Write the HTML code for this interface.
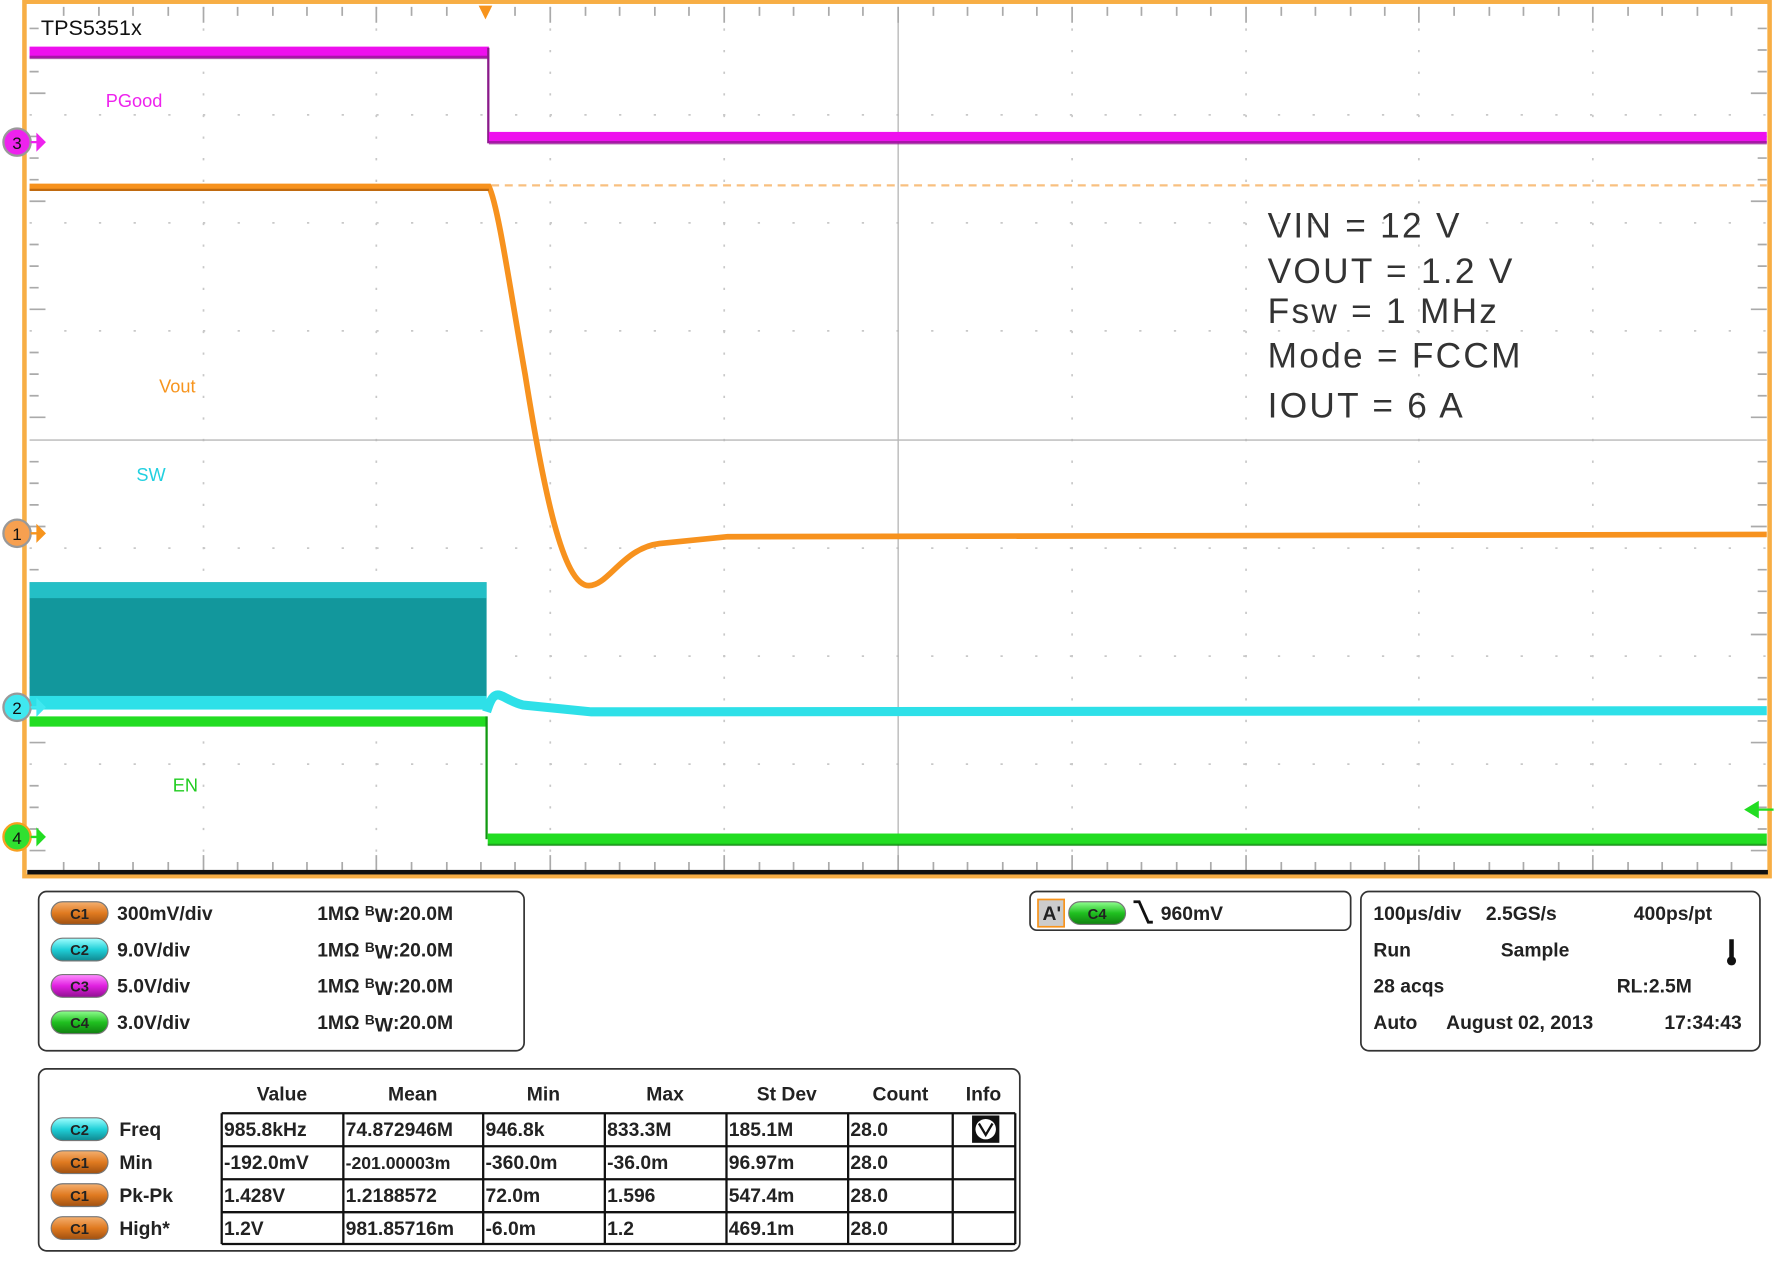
<!DOCTYPE html>
<html><head><meta charset="utf-8"><style>
html,body{margin:0;padding:0;background:#fff;width:1777px;height:1277px;overflow:hidden}
svg{display:block}
text{font-family:"Liberation Sans",Arial,sans-serif}
.b{font-weight:bold;font-size:17px;fill:#222}
</style></head><body>
<svg width="1777" height="1277" viewBox="0 0 1563 1123" preserveAspectRatio="none" xmlns="http://www.w3.org/2000/svg">
<defs>
<linearGradient id="go" x1="0" y1="0" x2="0" y2="1"><stop offset="0" stop-color="#f4b070"/><stop offset=".5" stop-color="#e07a20"/><stop offset="1" stop-color="#a05010"/></linearGradient>
<linearGradient id="gc" x1="0" y1="0" x2="0" y2="1"><stop offset="0" stop-color="#a0ffff"/><stop offset=".5" stop-color="#20d0d8"/><stop offset="1" stop-color="#108890"/></linearGradient>
<linearGradient id="gm" x1="0" y1="0" x2="0" y2="1"><stop offset="0" stop-color="#ff90ff"/><stop offset=".5" stop-color="#e020e0"/><stop offset="1" stop-color="#901090"/></linearGradient>
<linearGradient id="gg" x1="0" y1="0" x2="0" y2="1"><stop offset="0" stop-color="#90ff90"/><stop offset=".5" stop-color="#20c020"/><stop offset="1" stop-color="#108010"/></linearGradient>
</defs>
<rect x="21.5" y="1.5" width="1535" height="769" fill="#fff" stroke="#f7ae45" stroke-width="4"/>
<g stroke="#c8c8c8" stroke-width="1.5" stroke-dasharray="2 17">
<line x1="179" y1="6" x2="179" y2="766"/><line x1="331" y1="6" x2="331" y2="766"/><line x1="484" y1="6" x2="484" y2="766"/><line x1="637" y1="6" x2="637" y2="766"/>
<line x1="943" y1="6" x2="943" y2="766"/><line x1="1096" y1="6" x2="1096" y2="766"/><line x1="1248" y1="6" x2="1248" y2="766"/><line x1="1401" y1="6" x2="1401" y2="766"/>
</g>
<g stroke="#c8c8c8" stroke-width="1.5" stroke-dasharray="2 28.5">
<line x1="26" y1="101" x2="1554" y2="101"/><line x1="26" y1="196" x2="1554" y2="196"/><line x1="26" y1="291" x2="1554" y2="291"/>
<line x1="26" y1="482" x2="1554" y2="482"/><line x1="26" y1="577" x2="1554" y2="577"/><line x1="26" y1="672" x2="1554" y2="672"/>
</g>
<line x1="790" y1="6" x2="790" y2="766" stroke="#b8b8b8" stroke-width="1.2"/>
<line x1="26" y1="387" x2="1554" y2="387" stroke="#b8b8b8" stroke-width="1.2"/>
<g stroke="#aaa" stroke-width="1.5">
<path d="M56,6v8M87,6v8M117,6v8M148,6v8M179,6v14M209,6v8M240,6v8M270,6v8M301,6v8M331,6v14M362,6v8M393,6v8M453,6v8M484,6v14M515,6v8M545,6v8M576,6v8M606,6v8M637,6v14M668,6v8M698,6v8M729,6v8M759,6v8M790,6v14M821,6v8M851,6v8M882,6v8M912,6v8M943,6v14M974,6v8M1004,6v8M1035,6v8M1065,6v8M1096,6v14M1127,6v8M1157,6v8M1188,6v8M1218,6v8M1248,6v14M1279,6v8M1310,6v8M1340,6v8M1371,6v8M1401,6v14M1432,6v8M1462,6v8M1493,6v8M1523,6v8"/>
<path d="M56,758v8M87,758v8M117,758v8M148,758v8M179,752v14M209,758v8M240,758v8M270,758v8M301,758v8M331,752v14M362,758v8M393,758v8M423,758v8M453,758v8M484,752v14M515,758v8M545,758v8M576,758v8M606,758v8M637,752v14M668,758v8M698,758v8M729,758v8M759,758v8M790,752v14M821,758v8M851,758v8M882,758v8M912,758v8M943,752v14M974,758v8M1004,758v8M1035,758v8M1065,758v8M1096,752v14M1127,758v8M1157,758v8M1188,758v8M1218,758v8M1248,752v14M1279,758v8M1310,758v8M1340,758v8M1371,758v8M1401,752v14M1432,758v8M1462,758v8M1493,758v8M1523,758v8"/>
<path d="M26,25h8M26,44h8M26,63h8M26,82h14M26,120h8M26,139h8M26,158h8M26,177h14M26,215h8M26,234h8M26,253h8M26,272h14M26,310h8M26,329h8M26,348h8M26,367h14M26,406h8M26,425h8M26,444h8M26,463h14M26,501h8M26,520h8M26,539h8M26,558h14M26,596h8M26,615h8M26,634h8M26,653h14M26,691h8M26,710h8M26,729h8M26,748h14"/>
<path d="M1554,25h-8M1554,44h-8M1554,63h-8M1554,82h-14M1554,120h-8M1554,139h-8M1554,158h-8M1554,177h-14M1554,215h-8M1554,234h-8M1554,253h-8M1554,272h-14M1554,310h-8M1554,329h-8M1554,348h-8M1554,367h-14M1554,406h-8M1554,425h-8M1554,444h-8M1554,463h-14M1554,501h-8M1554,520h-8M1554,539h-8M1554,558h-14M1554,596h-8M1554,615h-8M1554,634h-8M1554,653h-14M1554,691h-8M1554,710h-8M1554,729h-8M1554,748h-14"/>
</g>
<rect x="24" y="765" width="1531" height="4" fill="#111"/>
<path d="M421,5h12l-6,12z" fill="#f7941d"/>
<rect x="26" y="41" width="404" height="10" fill="#ee10ee"/>
<rect x="26" y="49" width="404" height="3" fill="#8a1a8a" opacity=".7"/>
<rect x="428.5" y="42" width="2" height="84" fill="#8a1a8a"/>
<rect x="430" y="116" width="1124" height="10" fill="#ee10ee"/>
<rect x="430" y="124" width="1124" height="3" fill="#8a1a8a" opacity=".7"/>
<line x1="432" y1="163" x2="1554" y2="163" stroke="#f8c080" stroke-width="2" stroke-dasharray="7 5"/>
<path d="M26,164H430C438,180 448,250 462,330C478,430 495,515 518,515C535,515 548,482 580,478L640,472L1554,470" fill="none" stroke="#f7921e" stroke-width="5"/>
<path d="M26,167H430" stroke="#c06a10" stroke-width="2"/>
<rect x="26" y="512" width="402" height="110" fill="#12979c"/>
<rect x="26" y="512" width="402" height="14" fill="#24bfc6"/>
<rect x="26" y="612" width="402" height="12" fill="#2ee0e8"/>
<path d="M428,626C436,600 440,615 460,620L520,626L1554,625" fill="none" stroke="#2ee0e8" stroke-width="8"/>
<rect x="26" y="630" width="402" height="9" fill="#22dd22"/>
<rect x="427" y="630" width="2" height="108" fill="#119911"/>
<rect x="429" y="733" width="1125" height="10" fill="#22dd22"/>
<rect x="429" y="742" width="1125" height="2" fill="#118811" opacity=".7"/>
<path d="M1560,712h-24M1536,712l10,-6v12z" stroke="#22dd22" stroke-width="2" fill="#22dd22"/>
<text x="36" y="31" font-size="19" fill="#111">TPS5351x</text>
<text x="93" y="94" font-size="16" fill="#ee22ee">PGood</text>
<text x="140" y="345" font-size="16" fill="#f7941d">Vout</text>
<text x="120" y="423" font-size="16" fill="#22d0e0">SW</text>
<text x="152" y="696" font-size="16" fill="#22cc22">EN</text>
<g font-size="31" fill="#333" letter-spacing="2">
<text x="1115" y="209">VIN = 12 V</text>
<text x="1115" y="249">VOUT = 1.2 V</text>
<text x="1115" y="284">Fsw = 1 MHz</text>
<text x="1115" y="323">Mode = FCCM</text>
<text x="1115" y="367">IOUT = 6 A</text>
</g>
<g font-size="15" fill="#111" text-anchor="middle">
<circle cx="15" cy="125" r="12" fill="#ee22ee" stroke="#999" stroke-width="2"/><text x="15" y="131">3</text>
<path d="M27,125h12M39,125l-6,-6v12z" stroke="#ee22ee" stroke-width="2" fill="#ee22ee"/>
<circle cx="15" cy="469" r="12" fill="#f7a050" stroke="#999" stroke-width="2"/><text x="15" y="475">1</text>
<path d="M27,469h12M39,469l-6,-6v12z" stroke="#f7941d" stroke-width="2" fill="#f7941d"/>
<circle cx="15" cy="622" r="12" fill="#40e8f0" stroke="#999" stroke-width="2"/><text x="15" y="628">2</text>
<path d="M27,622h12M39,622l-6,-6v12z" stroke="#40e8f0" stroke-width="2" fill="#40e8f0"/>
<circle cx="15" cy="736" r="12" fill="#30e030" stroke="#f7a020" stroke-width="2"/><text x="15" y="742">4</text>
<path d="M27,736h12M39,736l-6,-6v12z" stroke="#22dd22" stroke-width="2" fill="#22dd22"/>
</g>
<rect x="34" y="784" width="427" height="140" rx="7" fill="#fff" stroke="#333" stroke-width="1.5"/>
<g font-size="13" font-weight="bold" text-anchor="middle" fill="#222">
<rect x="45" y="793" width="50" height="20" rx="10" fill="url(#go)" stroke="#777"/><text x="70" y="808">C1</text>
<rect x="45" y="825" width="50" height="20" rx="10" fill="url(#gc)" stroke="#777"/><text x="70" y="840">C2</text>
<rect x="45" y="857" width="50" height="20" rx="10" fill="url(#gm)" stroke="#777"/><text x="70" y="872">C3</text>
<rect x="45" y="889" width="50" height="20" rx="10" fill="url(#gg)" stroke="#777"/><text x="70" y="904">C4</text>
</g>
<g class="b">
<text x="103" y="809" class="b">300mV/div</text><text x="103" y="841" class="b">9.0V/div</text><text x="103" y="873" class="b">5.0V/div</text><text x="103" y="905" class="b">3.0V/div</text>
<text x="279" y="809" class="b">1MΩ  <tspan font-size="12" dy="-4">B</tspan><tspan dy="6">W</tspan><tspan dy="-2">:20.0M</tspan></text>
<text x="279" y="841" class="b">1MΩ  <tspan font-size="12" dy="-4">B</tspan><tspan dy="6">W</tspan><tspan dy="-2">:20.0M</tspan></text>
<text x="279" y="873" class="b">1MΩ  <tspan font-size="12" dy="-4">B</tspan><tspan dy="6">W</tspan><tspan dy="-2">:20.0M</tspan></text>
<text x="279" y="905" class="b">1MΩ  <tspan font-size="12" dy="-4">B</tspan><tspan dy="6">W</tspan><tspan dy="-2">:20.0M</tspan></text>
</g>
<rect x="906" y="784" width="282" height="34" rx="6" fill="#fff" stroke="#333" stroke-width="1.5"/>
<rect x="913" y="791" width="23" height="24" fill="#ccc" stroke="#f7941d" stroke-width="1.5"/>
<text x="917" y="809" class="b" font-size="15">A'</text>
<rect x="940" y="793" width="50" height="20" rx="10" fill="url(#gg)" stroke="#777"/>
<text x="965" y="808" font-size="13" font-weight="bold" text-anchor="middle" fill="#222">C4</text>
<path d="M997,793h5l8,18h4" fill="none" stroke="#111" stroke-width="2.5"/>
<text x="1021" y="809" class="b">960mV</text>
<rect x="1197" y="784" width="351" height="140" rx="7" fill="#fff" stroke="#333" stroke-width="1.5"/>
<g class="b">
<text x="1208" y="809" class="b">100μs/div</text><text x="1307" y="809" class="b">2.5GS/s</text><text x="1437" y="809" class="b">400ps/pt</text>
<text x="1208" y="841" class="b">Run</text><text x="1320" y="841" class="b">Sample</text>
<text x="1208" y="873" class="b">28 acqs</text><text x="1422" y="873" class="b">RL:2.5M</text>
<text x="1208" y="905" class="b">Auto</text><text x="1272" y="905" class="b">August 02, 2013</text><text x="1464" y="905" class="b">17:34:43</text>
</g>
<rect x="1521" y="826" width="4" height="18" fill="#111"/><circle cx="1523" cy="845" r="4" fill="#111"/>
<rect x="34" y="940" width="863" height="160" rx="7" fill="#fff" stroke="#333" stroke-width="1.5"/>
<g class="b" text-anchor="middle">
<text x="248" y="968" class="b">Value</text><text x="363" y="968" class="b">Mean</text><text x="478" y="968" class="b">Min</text><text x="585" y="968" class="b">Max</text><text x="692" y="968" class="b">St Dev</text><text x="792" y="968" class="b">Count</text><text x="865" y="968" class="b">Info</text>
</g>
<g stroke="#111" stroke-width="2" fill="none">
<path d="M195,979H893M195,1008H893M195,1037H893M195,1066H893M195,1094H893"/>
<path d="M195,979V1094M302,979V1094M425,979V1094M532,979V1094M639,979V1094M746,979V1094M838,979V1094M893,979V1094"/>
</g>
<rect x="855" y="981" width="24" height="24" fill="#111"/><circle cx="867" cy="993" r="9" fill="#fff"/><path d="M861,988l6,10l6,-10" stroke="#111" stroke-width="2" fill="none"/>
<g font-size="13" font-weight="bold" text-anchor="middle" fill="#222">
<rect x="45" y="983" width="50" height="20" rx="10" fill="url(#gc)" stroke="#777"/><text x="70" y="998">C2</text>
<rect x="45" y="1012" width="50" height="20" rx="10" fill="url(#go)" stroke="#777"/><text x="70" y="1027">C1</text>
<rect x="45" y="1041" width="50" height="20" rx="10" fill="url(#go)" stroke="#777"/><text x="70" y="1056">C1</text>
<rect x="45" y="1070" width="50" height="20" rx="10" fill="url(#go)" stroke="#777"/><text x="70" y="1085">C1</text>
</g>
<g class="b">
<text x="105" y="999" class="b">Freq</text><text x="105" y="1028" class="b">Min</text><text x="105" y="1057" class="b">Pk-Pk</text><text x="105" y="1086" class="b">High*</text>
<text x="197" y="999" class="b">985.8kHz</text><text x="304" y="999" class="b">74.872946M</text><text x="427" y="999" class="b">946.8k</text><text x="534" y="999" class="b">833.3M</text><text x="641" y="999" class="b">185.1M</text><text x="748" y="999" class="b">28.0</text>
<text x="197" y="1028" class="b">-192.0mV</text><text x="304" y="1028" class="b" style="font-size:15.5px">-201.00003m</text><text x="427" y="1028" class="b">-360.0m</text><text x="534" y="1028" class="b">-36.0m</text><text x="641" y="1028" class="b">96.97m</text><text x="748" y="1028" class="b">28.0</text>
<text x="197" y="1057" class="b">1.428V</text><text x="304" y="1057" class="b">1.2188572</text><text x="427" y="1057" class="b">72.0m</text><text x="534" y="1057" class="b">1.596</text><text x="641" y="1057" class="b">547.4m</text><text x="748" y="1057" class="b">28.0</text>
<text x="197" y="1086" class="b">1.2V</text><text x="304" y="1086" class="b">981.85716m</text><text x="427" y="1086" class="b">-6.0m</text><text x="534" y="1086" class="b">1.2</text><text x="641" y="1086" class="b">469.1m</text><text x="748" y="1086" class="b">28.0</text>
</g>
</svg>
</body></html>
